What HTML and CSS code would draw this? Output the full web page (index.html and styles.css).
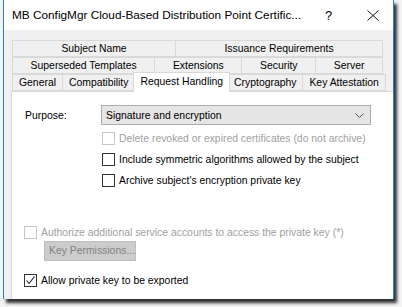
FILE: index.html
```html
<!DOCTYPE html>
<html lang="en">
<head>
    <meta charset="UTF-8">
    <title>MB ConfigMgr Cloud-Based Distribution Point Certificate Properties</title>
    <link rel="stylesheet" href="styles.css">
</head>
<body>
    <div class="desk">
        <div class="window">
            <div class="titlebar">
                <span class="title">MB ConfigMgr Cloud-Based Distribution Point Certific...</span>
                <span class="help">?</span>
                <svg class="close" viewBox="0 0 12 11" width="12" height="11">
                    <line x1="0.5" y1="0.5" x2="11.5" y2="10.5" stroke="#111" stroke-width="1"/>
                    <line x1="11.5" y1="0.5" x2="0.5" y2="10.5" stroke="#111" stroke-width="1"/>
                </svg>
            </div>

            <div class="dialog">
                <div class="tabs">
                    <div class="tab-row">
                        <div class="tab">Subject Name</div>
                        <div class="tab">Issuance Requirements</div>
                    </div>
                    <div class="tab-row">
                        <div class="tab">Superseded Templates</div>
                        <div class="tab">Extensions</div>
                        <div class="tab">Security</div>
                        <div class="tab">Server</div>
                    </div>
                    <div class="tab-row">
                        <div class="tab">General</div>
                        <div class="tab">Compatibility</div>
                        <div class="tab selected">Request Handling</div>
                        <div class="tab">Cryptography</div>
                        <div class="tab">Key Attestation</div>
                    </div>
                </div>

                <div class="panel">
                    <div class="purpose">
                        <label class="purpose-label">Purpose:</label>
                        <div class="combo">
                            <span>Signature and encryption</span>
                            <svg class="chevron" viewBox="0 0 9 5" width="9" height="5">
                                <polyline points="0.5,0.5 4.5,4.5 8.5,0.5" fill="none" stroke="#555" stroke-width="1"/>
                            </svg>
                        </div>
                    </div>

                    <div class="options">
                        <div class="check disabled"><span class="box"></span>Delete revoked or expired certificates (do not archive)</div>
                        <div class="check"><span class="box"></span>Include symmetric algorithms allowed by the subject</div>
                        <div class="check"><span class="box"></span>Archive subject's encryption private key</div>
                    </div>

                    <div class="check disabled authorize"><span class="box"></span>Authorize additional service accounts to access the private key (*)</div>
                    <div class="button disabled">Key Permissions...</div>

                    <div class="check allow">
                        <span class="box">
                            <svg viewBox="0 0 11 11" width="11" height="11">
                                <polyline points="1.5,5.5 4,8.5 9.5,1.5" fill="none" stroke="#222" stroke-width="1.1"/>
                            </svg>
                        </span>Allow private key to be exported
                    </div>
                    <div class="check disabled"><span class="box"></span></div>
                </div>
            </div>
        </div>
    </div>
</body>
</html>
```

FILE: styles.css
```css
body {
    margin: 0;
    width: 402px;
    height: 307px;
    overflow: hidden;
    background-color: #f4f4f4;
    font-family: "Liberation Sans", Arial, sans-serif;
    font-size: 10.4px;
    color: #000;
}

.desk {
    padding-left: 3px;
    height: 307px;
}

.window {
    width: 389px;
    height: 299px;
    overflow: hidden;
    background-color: #f0f0f0;
    border-left: 1px solid #2a7fd4;
    border-right: 1px solid #2a7fd4;
    box-shadow: 3px 4px 3px rgba(0, 0, 0, 0.8);
}

.titlebar {
    height: 30px;
    background-color: white;
    display: flex;
    align-items: center;
    padding-left: 8px;
}

.title {
    font-size: 11.8px;
    width: 313px;
    white-space: nowrap;
    overflow: hidden;
}

.help {
    font-size: 13px;
    width: 42px;
}

.close {
    flex: none;
}

.dialog {
    padding: 10px 6px 0 7px;
}

.tabs {
    width: 371px;
    margin-left: 1px;
}

.tab-row {
    display: flex;
    height: 17px;
}

.tab {
    flex: 1 1 auto;
    box-sizing: border-box;
    height: 17px;
    line-height: 15px;
    padding: 0 6px;
    text-align: center;
    white-space: nowrap;
    border: 1px solid #d9d9d9;
    margin-left: -1px;
    background-color: #f0f0f0;
}

.tab:first-child {
    margin-left: 0;
}

.tab.selected {
    position: relative;
    z-index: 1;
    height: 20px;
    margin-top: -2px;
    margin-left: -2px;
    margin-right: -2px;
    line-height: 18px;
    background-color: white;
    border-bottom: none;
}

.panel {
    width: 373px;
    height: 220px;
    background-color: white;
    border: 1px solid #d9d9d9;
    padding-left: 12px;
}

.purpose {
    display: flex;
    align-items: center;
    margin-top: 13px;
}

.purpose-label {
    width: 77px;
    padding-left: 1px;
    box-sizing: border-box;
}

.combo {
    width: 270px;
    height: 20px;
    box-sizing: border-box;
    background-color: #e5e5e5;
    border: 1px solid #adadad;
    display: flex;
    align-items: center;
    justify-content: space-between;
    padding: 0 6px 0 4px;
}

.options {
    margin-left: 78px;
    margin-top: 7px;
}

.check {
    display: flex;
    align-items: center;
    height: 13px;
    margin-bottom: 8px;
    white-space: nowrap;
}

.box {
    width: 13px;
    height: 13px;
    box-sizing: border-box;
    border: 1px solid #333;
    margin-right: 4px;
    flex: none;
    display: flex;
    align-items: center;
    justify-content: center;
}

.check.disabled {
    color: #a0a0a0;
}

.check.disabled .box {
    border-color: #c6c6c6;
}

.authorize {
    margin-top: 39px;
    margin-bottom: 2px;
}

.button {
    width: 92px;
    height: 20px;
    box-sizing: border-box;
    margin-left: 20px;
    line-height: 18px;
    padding-left: 4px;
    white-space: nowrap;
    background-color: #cccccc;
    border: 1px solid #bfbfbf;
    color: #838383;
}

.allow {
    margin-top: 13px;
    margin-bottom: 0;
}

.allow + .check {
    margin-top: 12px;
}
```
